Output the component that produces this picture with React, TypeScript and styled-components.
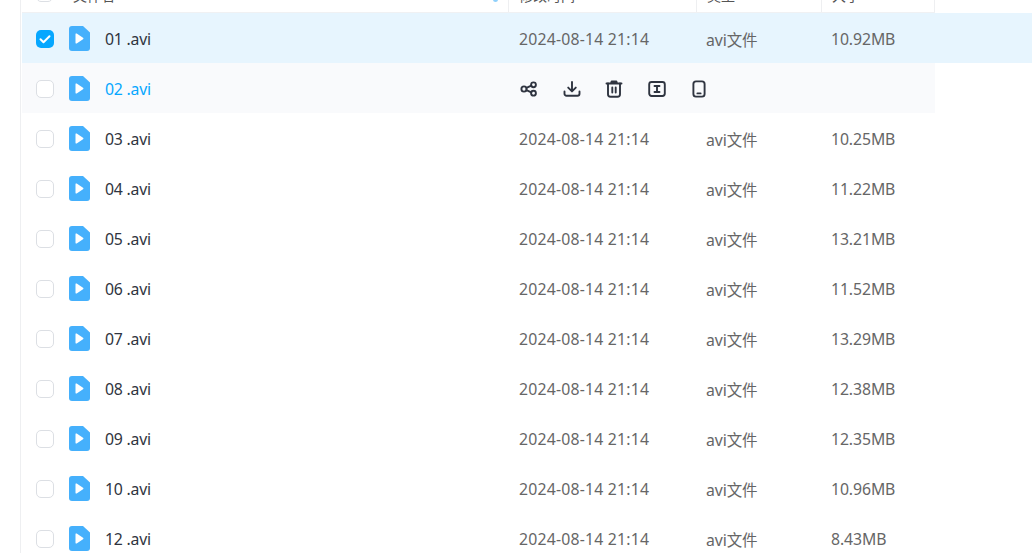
import React from 'react';
import styled, { createGlobalStyle } from 'styled-components';

const GlobalStyle = createGlobalStyle`
  html, body {
    margin: 0;
    padding: 0;
    background: #fff;
    overflow: hidden;
  }
  body {
    font-family: 'Noto Sans', 'Noto Sans CJK SC', sans-serif;
  }
`;

const Page = styled.div`
  width: 1032px;
  height: 553px;
  overflow: hidden;
  display: flex;
`;

const Gutter = styled.div`
  width: 20px;
  flex: none;
  border-right: 1px solid #eeeff1;
`;

const Table = styled.div`
  flex: 1;
  margin-left: 1px;
  min-width: 0;
`;

const Columns = styled.div`
  display: grid;
  grid-template-columns: 487px 188px 125px 113px;
  width: 913px;
`;

const Header = styled(Columns)`
  height: 13px;
  box-sizing: border-box;
  overflow: hidden;
  border-bottom: 1px solid #f0f1f3;
`;

const HeadCell = styled.div<{ $first?: boolean }>`
  position: relative;
  box-sizing: border-box;
  height: 24px;
  margin-top: -11px;
  padding-left: ${p => (p.$first ? '51px' : '10px')};
  border-right: 1px solid #eeeff1;
  font-size: 14px;
  line-height: 14px;
  color: #555;
`;

const HeadCheck = styled.span`
  position: absolute;
  left: 14px;
  top: -4px;
  width: 15px;
  height: 15px;
  border: 1.5px solid #dcdfe4;
  border-radius: 5px;
`;

const SortMark = styled.span`
  position: absolute;
  right: 10px;
  top: 10px;
  width: 5px;
  height: 3px;
  background: #8fd0fb;
  border-radius: 0 0 3px 3px;
`;

const Row = styled.div<{ $selected?: boolean }>`
  height: 50px;
  background: ${p => (p.$selected ? '#e7f5fe' : 'transparent')};
`;

const RowGrid = styled(Columns)<{ $hover?: boolean }>`
  height: 50px;
  box-sizing: border-box;
  padding-top: 2px;
  background: ${p => (p.$hover ? '#f9fafc' : 'transparent')};
  align-items: center;
  font-size: 15.8px;
  color: #666;
`;

const NameCell = styled.div<{ $hover?: boolean }>`
  display: flex;
  align-items: center;
  padding-left: 14px;
  color: ${p => (p.$hover ? '#06a7ff' : '#2f3440')};
`;

const Check = styled.span<{ $checked?: boolean }>`
  width: 18px;
  height: 18px;
  flex: none;
  box-sizing: border-box;
  border-radius: 5px;
  border: ${p => (p.$checked ? 'none' : '1.5px solid #dcdfe4')};
  background: ${p => (p.$checked ? '#06a7ff' : '#fff')};
  display: flex;
  align-items: center;
  justify-content: center;
`;

const FileIcon = styled.svg`
  width: 21px;
  height: 25px;
  flex: none;
  margin-left: 15px;
  margin-top: -2px;
`;

const FileName = styled.span`
  margin-left: 15px;
  letter-spacing: -0.2px;
`;

const DateCell = styled.div`
  padding-left: 10px;
  letter-spacing: 0.2px;
`;

const Cell = styled.div`
  padding-left: 9px;
  letter-spacing: -0.1px;
`;

const Cjk = styled.span`
  font-size: 15.5px;
`;

const Actions = styled.div`
  grid-column: 2 / 5;
  display: flex;
  align-items: center;
  gap: 22.5px;
  padding-left: 10px;
  height: 20px;
  color: #2f3440;
`;

const ActionIcon = styled.svg`
  width: 20px;
  height: 20px;
  flex: none;
  fill: none;
  stroke: currentColor;
  stroke-width: 1.9;
  stroke-linecap: round;
  stroke-linejoin: round;
`;

const VideoFile = () => (
  <FileIcon viewBox="0 0 21 25">
    <path d="M3 0h11l7 6.5V22a3 3 0 0 1-3 3H3a3 3 0 0 1-3-3V3a3 3 0 0 1 3-3z" fill="#45b0fc" />
    <path d="M6.5 8.3v8.4a.8.8 0 0 0 1.2.7l6.3-4.2a.8.8 0 0 0 0-1.4L7.7 7.6a.8.8 0 0 0-1.2.7z" fill="#fff" />
  </FileIcon>
);

const files = [
  { name: '01 .avi', size: '10.92MB' },
  { name: '02 .avi', size: '' },
  { name: '03 .avi', size: '10.25MB' },
  { name: '04 .avi', size: '11.22MB' },
  { name: '05 .avi', size: '13.21MB' },
  { name: '06 .avi', size: '11.52MB' },
  { name: '07 .avi', size: '13.29MB' },
  { name: '08 .avi', size: '12.38MB' },
  { name: '09 .avi', size: '12.35MB' },
  { name: '10 .avi', size: '10.96MB' },
  { name: '12 .avi', size: '8.43MB' },
];

const App: React.FC = () => (
  <Page>
    <GlobalStyle />
    <Gutter />
    <Table>
      <Header>
        <HeadCell $first>
          <HeadCheck />
          文件名
          <SortMark />
        </HeadCell>
        <HeadCell>修改时间</HeadCell>
        <HeadCell>类型</HeadCell>
        <HeadCell>大小</HeadCell>
      </Header>
      {files.map((file, i) => {
        const hover = i === 1;
        const selected = i === 0;
        return (
          <Row key={file.name} $selected={selected}>
            <RowGrid $hover={hover}>
              <NameCell $hover={hover}>
                <Check $checked={selected}>
                  {selected && (
                    <svg width="14" height="14" viewBox="0 0 14 14">
                      <path d="M2.5 7.2l3 3 6-6" fill="none" stroke="#fff" strokeWidth="2" strokeLinecap="round" strokeLinejoin="round" />
                    </svg>
                  )}
                </Check>
                <VideoFile />
                <FileName>{file.name}</FileName>
              </NameCell>
              {hover ? (
                <Actions>
                  <ActionIcon viewBox="0 0 20 20">
                    <circle cx="5" cy="10" r="2.6" />
                    <circle cx="14.5" cy="5.8" r="2.4" />
                    <circle cx="14.5" cy="14.2" r="2.4" />
                    <path d="M7.4 8.9l4.9-2.2M7.4 11.1l4.9 2.2" />
                  </ActionIcon>
                  <ActionIcon viewBox="0 0 20 20">
                    <path d="M10 3v9M6.2 8.6L10 12.4l3.8-3.8" />
                    <path d="M2.5 12.5v2.2a2 2 0 0 0 2 2h11a2 2 0 0 0 2-2v-2.2" />
                  </ActionIcon>
                  <ActionIcon viewBox="0 0 20 20">
                    <path d="M2.5 4.5h15M7 4.2l.6-1.7h4.8l.6 1.7" />
                    <path d="M4 4.5v10.8a2.5 2.5 0 0 0 2.5 2.5h7a2.5 2.5 0 0 0 2.5-2.5V4.5" />
                    <path d="M8.3 8.5v5M11.7 8.5v5" />
                  </ActionIcon>
                  <ActionIcon viewBox="0 0 20 20">
                    <rect x="2.2" y="3" width="15.6" height="14" rx="2.4" />
                    <path d="M7.5 7h5M7.5 13h5M10 7v6" />
                  </ActionIcon>
                  <ActionIcon viewBox="0 0 20 20">
                    <rect x="4.4" y="2.4" width="11.2" height="15.2" rx="2.6" />
                    <path d="M8.4 14.4h3.2" />
                  </ActionIcon>
                </Actions>
              ) : (
                <>
                  <DateCell>2024-08-14 21:14</DateCell>
                  <Cell>avi<Cjk>文件</Cjk></Cell>
                  <Cell>{file.size}</Cell>
                </>
              )}
            </RowGrid>
          </Row>
        );
      })}
    </Table>
  </Page>
);

export default App;
